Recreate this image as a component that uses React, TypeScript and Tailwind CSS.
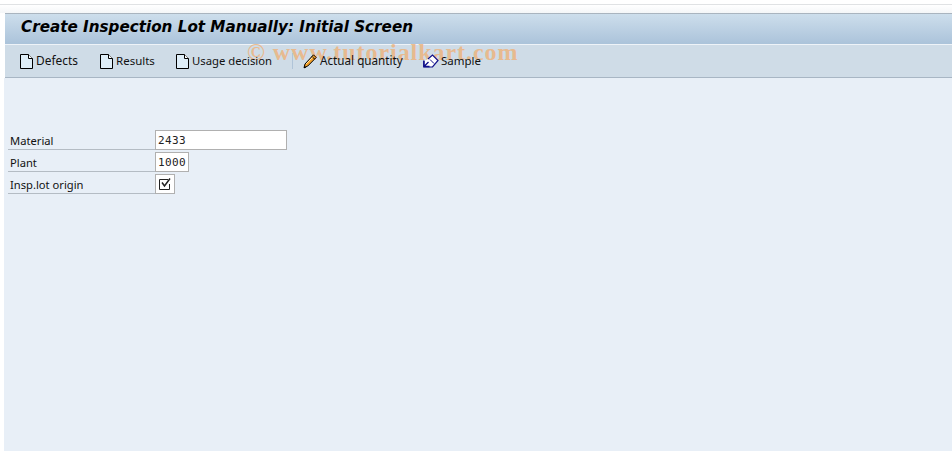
const sans = { fontFamily: '"Noto Sans", "Open Sans", sans-serif' };

function DocIcon() {
  return (
    <svg width="13" height="15" viewBox="0 0 13 15" className="shrink-0">
      <path d="M0.5 0.5H8.5L12.5 4.5V14.5H0.5Z" fill="#dfeef8" stroke="#000" />
      <path d="M8.5 0.5V4.5H12.5" fill="#fff" stroke="#000" />
    </svg>
  );
}

function PencilIcon() {
  return (
    <svg width="14" height="15" viewBox="0 0 14 15" className="shrink-0">
      <path d="M10.5 0.8L13.2 3.5L4.8 12L1 13.8L2 10Z" fill="#f4a028" stroke="#000" strokeWidth="1" />
      <path d="M9 2.5L11.5 5" stroke="#000" strokeWidth="1" />
      <path d="M3 10L9.5 3.5" stroke="#ffe0a0" strokeWidth="1" />
      <path d="M1.2 13.6L2.6 13" stroke="#000" strokeWidth="1.4" />
    </svg>
  );
}

function SampleIcon() {
  return (
    <svg width="16" height="14" viewBox="0 0 16 14" className="shrink-0">
      <path d="M5 5L9.5 1L15 6.5L9.5 13H1V7" fill="#fff" stroke="#10108a" strokeWidth="1.2" />
      <path d="M0.8 6.5V12.5H6.5M1 12.5L5.5 8" fill="none" stroke="#10108a" strokeWidth="1.4" />
      <path d="M7 5.5L11 9.5" fill="none" stroke="#10108a" strokeWidth="1" />
    </svg>
  );
}

function Tool({ icon, label, className, gap, size }: { icon: React.ReactNode; label: string; className: string; gap: string; size: string }) {
  return (
    <div className={`relative z-10 flex items-center ${gap} ${className}`}>
      {icon}
      <span className={`pb-px ${size} leading-none text-[#111]`} style={sans}>{label}</span>
    </div>
  );
}

function Row({ label, children }: { label: string; children: React.ReactNode }) {
  return (
    <div className="flex h-[22px] items-start">
      <span
        className="flex h-[20px] w-[147px] shrink-0 items-center border-b border-[#b4bcc4] pl-[2px] pt-[2px] text-[11.2px] leading-none text-[#111]"
        style={sans}
      >
        {label}
      </span>
      {children}
    </div>
  );
}

function Field({ value, w }: { value: string; w: string }) {
  return (
    <div
      className={`flex h-[20px] ${w} shrink-0 items-center border border-[#b0b0b0] bg-white pl-[2px] leading-none tracking-[0.4px] text-[#222]`}
      style={{ fontFamily: '"DejaVu Sans Mono", monospace', fontSize: 11 }}
    >
      {value}
    </div>
  );
}

export default function App() {
  return (
    <div className="relative h-[451px] w-[952px] overflow-hidden bg-white">
      <div className="h-[4px] bg-white" />
      <div className="h-[9px] border-t border-[#e0e2e4] bg-gradient-to-b from-white to-[#f4f6f8]" />
      <div className="ml-[4px] flex flex-col">
        <div className="ml-px flex h-[31px] items-center border-t border-t-[#a9b4bf] bg-gradient-to-b from-[#cddeec] to-[#abc3da] pb-[2px] pl-[16px]">
          <span
            className="text-[15.2px] font-bold italic leading-none text-black"
            style={{ fontFamily: '"DejaVu Sans", Verdana, sans-serif' }}
          >
            Create Inspection Lot Manually: Initial Screen
          </span>
        </div>
        <div className="ml-px flex h-[34px] items-center border-y border-t-[#eef3f8] border-b-[#a8b6c4] bg-[#cfdce7] pl-[15px]">
          <Tool icon={<DocIcon />} label="Defects" className="w-[80px]" gap="gap-[3px]" size="text-[11.9px]" />
          <Tool icon={<DocIcon />} label="Results" className="w-[76px]" gap="gap-[3px]" size="text-[11.5px]" />
          <Tool icon={<DocIcon />} label="Usage decision" className="w-[116px]" gap="gap-[3px]" size="text-[11.3px]" />
          <div className="mr-[10px] h-[16px] w-px bg-[#b0c4d8]" />
          <Tool icon={<PencilIcon />} label="Actual quantity" className="w-[120px]" gap="gap-[3px]" size="text-[11.7px]" />
          <Tool icon={<SampleIcon />} label="Sample" className="w-[70px]" gap="gap-[2px]" size="text-[11.5px]" />
        </div>
        <div className="h-[373px] bg-[#e8eff7] pl-[4px] pt-[52px]">
          <Row label="Material"><Field value="2433" w="w-[132px]" /></Row>
          <Row label="Plant"><Field value="1000" w="w-[34px]" /></Row>
          <Row label="Insp.lot origin">
            <div className="flex h-[20px] w-[20px] shrink-0 items-center justify-center border border-[#b0b0b0] bg-white">
              <svg width="14" height="14" viewBox="0 0 14 14">
                <path d="M11.5 7V12.5H1.5V2.5H10" fill="none" stroke="#222" strokeWidth="1" />
                <path d="M4 5.5L6.5 9L12 1.5" fill="none" stroke="#222" strokeWidth="1.5" />
              </svg>
            </div>
          </Row>
        </div>
      </div>
      <div
        className="pointer-events-none absolute left-[247px] top-[40px] text-[24px] font-bold leading-none tracking-[0.95px] text-[#eeb27a] opacity-80"
        style={{ fontFamily: '"Liberation Serif", serif' }}
      >
        © www.tutorialkart.com
      </div>
    </div>
  );
}
